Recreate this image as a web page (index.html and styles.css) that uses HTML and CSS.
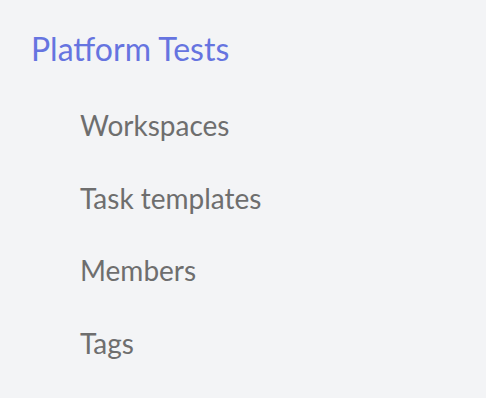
FILE: index.html
```html
<!DOCTYPE html>
<html lang="en">
  <head>
    <meta charset="UTF-8" />
    <meta name="viewport" content="width=device-width, initial-scale=1.0" />
    <title>Platform Tests</title>
    <link rel="stylesheet" href="styles.css">
  </head>
  <body>
    <nav class="sidebar">
      <h2 class="project">Platform Tests</h2>
      <ul class="menu">
        <li><a href="#">Workspaces</a></li>
        <li><a href="#">Task templates</a></li>
        <li><a href="#">Members</a></li>
        <li><a href="#">Tags</a></li>
      </ul>
    </nav>
  </body>
</html>
```

FILE: styles.css
```css
body {
  font-family: "Lato", "Liberation Sans", sans-serif;
  background-color: #f3f4f6;
  margin: 0;
  padding: 0;
}
.sidebar {
  padding: 29px 31px 0;
}
.project {
  margin: 0;
  font-size: 32px;
  font-weight: 400;
  line-height: 40px;
  color: #6674e0;
}
.menu {
  list-style: none;
  margin: 39px 0 0;
  padding: 0 0 0 49px;
  display: flex;
  flex-direction: column;
  gap: 38.5px;
}
.menu a {
  display: block;
  font-size: 28px;
  line-height: 34px;
  color: #6e6e6e;
  text-decoration: none;
}
```
